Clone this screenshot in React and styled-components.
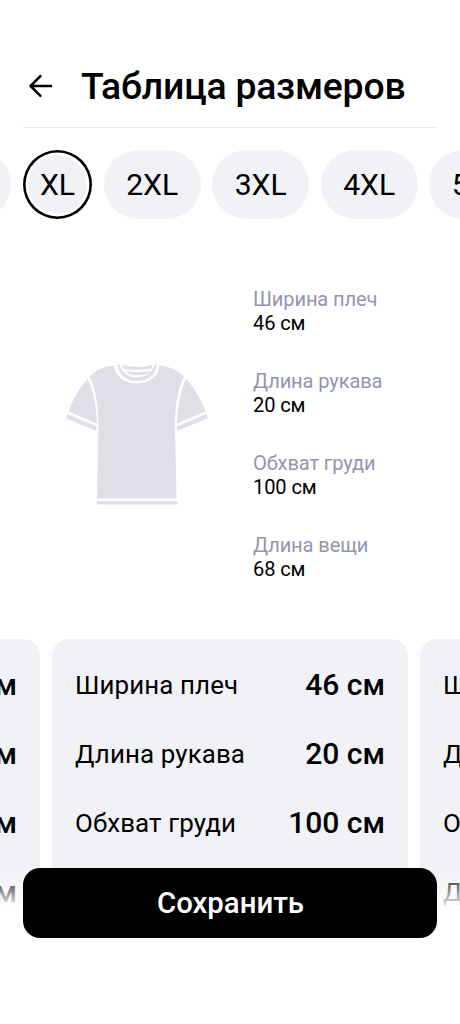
import React from "react";
import styled, { createGlobalStyle } from "styled-components";

const GlobalStyle = createGlobalStyle`
  * { box-sizing: border-box; }
  html, body { margin: 0; background: #fff; }
  body { font-family: Roboto, "Noto Sans", sans-serif; color: #000; overflow: hidden; }
  button { font-family: inherit; color: inherit; border: 0; padding: 0; margin: 0; }
`;

const Screen = styled.main`
  position: relative;
  display: flex;
  flex-direction: column;
  width: 460px;
  height: 1024px;
  overflow: hidden;
  background: #fff;
`;

const Header = styled.header`
  display: flex;
  align-items: center;
  height: 82px;
  padding-bottom: 1px;
  margin: 46px 23px 0;
  flex: none;
  border-bottom: 1.4px solid #ebebee;
`;

const BackButton = styled.button`
  display: flex;
  width: 35px;
  height: 35px;
  align-items: center;
  justify-content: center;
  background: none;
`;

const Title = styled.h1`
  margin: 0 0 0 23px;
  font-size: 37.4px;
  line-height: 44px;
  font-weight: 500;
  letter-spacing: -0.23px;
  white-space: nowrap;
`;

const SizeStrip = styled.div`
  display: flex;
  gap: 11.75px;
  height: 69px;
  margin: 22px 0 0 -85.5px;
  flex: none;
`;

const SizeChip = styled.button`
  flex: none;
  width: ${(p) => (p.$short ? 69 : 96.75)}px;
  height: 69px;
  border-radius: 35px;
  background: #f1f2f6;
  box-shadow: ${(p) => (p.$active ? "inset 0 0 0 2.6px #000, inset 0 0 0 5.5px #fff" : "none")};
  font-size: 30.2px;
  line-height: 36px;
  letter-spacing: -0.1px;
`;

const Preview = styled.section`
  display: flex;
  height: 420px;
  flex: none;
`;

const Figure = styled.div`
  display: flex;
  align-items: center;
  width: 230px;
  padding: 11px 0 0 60px;
`;

const Specs = styled.dl`
  display: flex;
  flex-direction: column;
  gap: 34px;
  margin: 0;
  padding: 68px 0 0 23px;
`;

const SpecName = styled.dt`
  font-size: 20.1px;
  line-height: 24px;
  letter-spacing: -0.12px;
  color: #9395af;
`;

const SpecValue = styled.dd`
  margin: 0;
  font-size: 20.1px;
  line-height: 24px;
  letter-spacing: -0.12px;
`;

const CardStrip = styled.section`
  display: flex;
  gap: 12px;
  flex: none;
  margin-left: -316px;
`;

const Card = styled.div`
  display: flex;
  flex-direction: column;
  flex: none;
  width: 356px;
  height: 299px;
  padding: 11.5px 23px;
  border-radius: 17px;
  background: #f1f2f6;
`;

const CardRow = styled.div`
  display: flex;
  align-items: center;
  justify-content: space-between;
  height: 69px;
`;

const RowName = styled.span`
  font-size: 25.9px;
  letter-spacing: 0.12px;
`;

const RowValue = styled.span`
  padding-bottom: 2px;
  font-size: 30px;
  font-weight: 500;
`;

const Footer = styled.footer`
  position: absolute;
  left: 0;
  right: 0;
  bottom: 0;
  height: 156px;
  padding: 0 23px;
  background: linear-gradient(to bottom, rgba(255, 255, 255, 0) 0, #fff 42px);
`;

const SaveButton = styled.button`
  display: block;
  width: 100%;
  height: 69.5px;
  border-radius: 17px;
  background: #000;
  color: #fff;
  font-size: 29.4px;
  font-weight: 500;
  padding-left: 1px;
`;

const sizes = ["L", "XL", "2XL", "3XL", "4XL", "5XL"];

const measures = [
  ["Ширина плеч", "46 см"],
  ["Длина рукава", "20 см"],
  ["Обхват груди", "100 см"],
  ["Длина вещи", "68 см"],
];

function BackArrow() {
  return (
    <svg width="24" height="24" viewBox="0 0 24 24" fill="none" stroke="#000" strokeWidth="2.5" strokeLinecap="round" strokeLinejoin="round">
      <path d="M22 12H1.600M11.400 2.200L1.600 12L11.400 21.800" />
    </svg>
  );
}

function Shirt() {
  return (
    <svg width="160" height="150" viewBox="60 360 160 150" fill="#dedfe7">
      <path d="M114 365.5C106 366 97 369 89.5 376.5C95 386 99 406 98.5 430L97 498.5H176.5L175 430C174.500 406 178.500 386 184 376.500C177 370 168 366 159.500 365.500C158 377 149 383.500 137 383.500S115.500 377 114 365.500Z" />
      <path d="M87.500 379C80 387 73 399 68.500 411.500L97 423.500C96 405 93 389 87.500 379Z" />
      <path d="M186.200 379C193.500 387 201 399 205.500 411.500L177 423.500C177.500 405 181 389 186.200 379Z" />
      <path d="M67.300 414L66.300 418.500L96.500 431V426.500Z" />
      <path d="M206.700 414L207.500 418.500L177 431V426.500Z" />
      <path d="M96.500 501H177.500V503C177.500 504 177 504.500 176 504.500H98C97 504.500 96.500 504 96.500 503Z" />
      <path d="M117.300 365L119.800 364.500C121 371 127 377.500 137 377.500S153 371 154.500 364.500L157 365C155 375 148.500 381 137 381S119 375 117.300 365Z" />
      <path d="M126 371C133 372.500 142 372.500 150 371C146 376.800 130 376.800 126 371Z" />
      <path d="M122 365C132 367.500 142 367.500 152.500 365L151.500 368.500C142 370.200 132 370.200 123.500 368.500Z" />
    </svg>
  );
}

function MeasureCard() {
  return (
    <Card>
      {measures.map(([name, value]) => (
        <CardRow key={name}>
          <RowName>{name}</RowName>
          <RowValue>{value}</RowValue>
        </CardRow>
      ))}
    </Card>
  );
}

export default function App() {
  return (
    <>
      <GlobalStyle />
      <Screen>
        <Header>
          <BackButton aria-label="Назад">
            <BackArrow />
          </BackButton>
          <Title>Таблица размеров</Title>
        </Header>
        <SizeStrip>
          {sizes.map((size) => (
            <SizeChip key={size} $short={size === "XL"} $active={size === "XL"}>
              {size}
            </SizeChip>
          ))}
        </SizeStrip>
        <Preview>
          <Figure>
            <Shirt />
          </Figure>
          <Specs>
            {measures.map(([name, value]) => (
              <div key={name}>
                <SpecName>{name}</SpecName>
                <SpecValue>{value}</SpecValue>
              </div>
            ))}
          </Specs>
        </Preview>
        <CardStrip>
          <MeasureCard />
          <MeasureCard />
          <MeasureCard />
        </CardStrip>
        <Footer>
          <SaveButton>Сохранить</SaveButton>
        </Footer>
      </Screen>
    </>
  );
}
